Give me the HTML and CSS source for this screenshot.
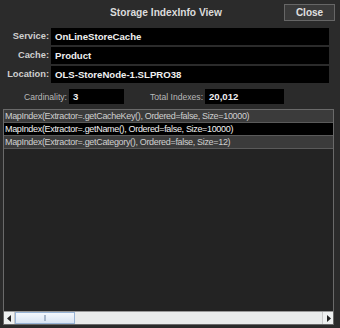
FILE: index.html
```html
<!DOCTYPE html>
<html lang="en">
<head>
    <meta charset="UTF-8" />
    <title>Storage IndexInfo View</title>
    <link rel="stylesheet" href="styles.css">
</head>
<body>
    <div class="dialog">
        <div class="header">
            <span></span>
            <h1>Storage IndexInfo View</h1>
            <button class="close-btn">Close</button>
        </div>

        <!-- cache details -->
        <div class="details">
            <label>Service:</label>
            <div class="field">OnLineStoreCache</div>
            <label>Cache:</label>
            <div class="field">Product</div>
            <label>Location:</label>
            <div class="field">OLS-StoreNode-1.SLPRO38</div>
        </div>

        <div class="stats">
            <span class="stat-label cardinality">Cardinality:</span>
            <div class="stat-value small">3</div>
            <span class="stat-label total">Total Indexes:</span>
            <div class="stat-value wide">20,012</div>
        </div>

        <!-- index list -->
        <div class="list">
            <div class="rows">
                <div class="row">MapIndex(Extractor=.getCacheKey(), Ordered=false, Size=10000)</div>
                <div class="row selected">MapIndex(Extractor=.getName(), Ordered=false, Size=10000)</div>
                <div class="row">MapIndex(Extractor=.getCategory(), Ordered=false, Size=12)</div>
            </div>
            <div class="scrollbar">
                <div class="arrow">
                    <svg width="5" height="7" viewBox="0 0 5 7"><path d="M4 0 L0 3.5 L4 7 Z" fill="#222"/></svg>
                </div>
                <div class="track">
                    <div class="thumb"><span class="grip"></span></div>
                </div>
                <div class="arrow">
                    <svg width="5" height="7" viewBox="0 0 5 7"><path d="M1 0 L5 3.5 L1 7 Z" fill="#222"/></svg>
                </div>
            </div>
        </div>
    </div>
</body>
</html>
```

FILE: styles.css
```css
body {
    margin: 0;
    padding: 0;
    background: #2b2b2b;
    font-family: "Liberation Sans", Arial, sans-serif;
}
.dialog {
    width: 340px;
    height: 328px;
    box-sizing: border-box;
    padding: 0 6px 3px 3px;
    display: flex;
    flex-direction: column;
}
.header {
    display: grid;
    grid-template-columns: 1fr auto 1fr;
    align-items: center;
    height: 24px;
    margin-right: -1px;
}
.header h1 {
    margin: 0;
    font-size: 10.2px;
    font-weight: bold;
    color: #dcdcdc;
    padding-right: 6px;
}
.close-btn {
    justify-self: end;
    width: 51px;
    height: 17px;
    margin-top: 1px;
    background: #3a3a3a;
    border: 1px solid #666;
    color: #e0e0e0;
    font-family: inherit;
    font-size: 10px;
    font-weight: bold;
    padding: 0;
}
.details {
    display: grid;
    grid-template-columns: 46px 278px;
    column-gap: 2px;
    row-gap: 2px;
    margin-top: 4px;
}
.details label {
    text-align: right;
    font-size: 9.3px;
    font-weight: bold;
    color: #cfcfcf;
    line-height: 17px;
}
.field {
    height: 17px;
    line-height: 17px;
    background: #000;
    color: #f0f0f0;
    font-size: 9.6px;
    font-weight: bold;
    padding-left: 4px;
}
.stats {
    display: flex;
    align-items: center;
    height: 15px;
    margin-top: 6px;
}
.stat-label {
    font-size: 8.6px;
    color: #b8b8b8;
    margin-right: 2px;
}
.cardinality {
    margin-left: 21px;
}
.total {
    margin-left: 26px;
}
.stat-value {
    height: 15px;
    line-height: 15px;
    background: #000;
    color: #f0f0f0;
    font-size: 9.6px;
    font-weight: bold;
    padding-left: 4px;
    box-sizing: border-box;
}
.small {
    width: 55px;
}
.wide {
    width: 79px;
}
.list {
    flex: 1;
    margin-top: 5px;
    background: #232323;
    border: 1px solid #6a6a6a;
    display: flex;
    flex-direction: column;
}
.rows {
    flex: 1;
}
.row {
    height: 12px;
    line-height: 12px;
    font-size: 9px;
    letter-spacing: -0.33px;
    color: #cfcfcf;
    background: #3b3b3b;
    border-bottom: 1px solid #5a5a5a;
    padding-left: 1px;
    white-space: nowrap;
}
.row.selected {
    background: #000;
    color: #f2f2f2;
}
.scrollbar {
    display: flex;
    height: 12px;
    background: #e9ebeb;
    border-top: 1px solid #999;
}
.arrow {
    width: 10px;
    display: flex;
    align-items: center;
    justify-content: center;
    background: #eef0f0;
}
.track {
    flex: 1;
    border-left: 1px solid #c8c8c8;
    border-right: 1px solid #c8c8c8;
}
.thumb {
    width: 60px;
    height: 100%;
    box-sizing: border-box;
    background: linear-gradient(#f4f8fd, #d8e4f3);
    border: 1px solid #98b4d6;
    display: flex;
    align-items: center;
    justify-content: center;
}
.grip {
    width: 2px;
    height: 6px;
    background: #a8b8cc;
}
```
